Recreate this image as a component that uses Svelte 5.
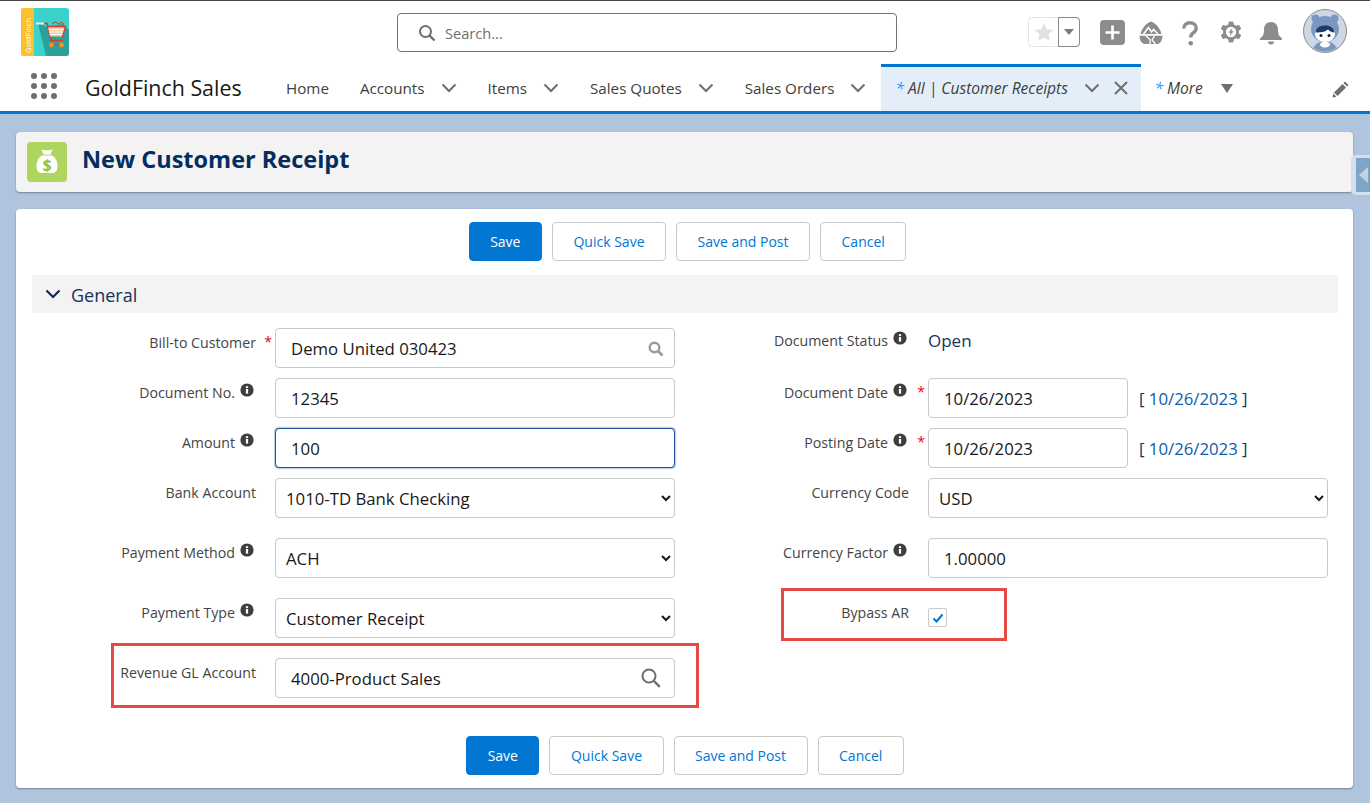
<script>
	const navItems = [
		{ label: 'Accounts' },
		{ label: 'Items' },
		{ label: 'Sales Quotes' },
		{ label: 'Sales Orders' }
	];
	const actions = ['Quick Save', 'Save and Post', 'Cancel'];
</script>

{#snippet info()}
	<svg class="info" viewBox="0 0 14 14"><circle cx="7" cy="7" r="6.6" fill="#3e3e3c" /><rect x="5.9" y="6" width="2.2" height="4.6" fill="#fff" /><rect x="5.9" y="3.2" width="2.2" height="1.9" fill="#fff" /></svg>
{/snippet}

{#snippet chevron(cls)}
	<svg class={cls} viewBox="0 0 16 10"><path d="M1.5 1.5 8 8l6.5-6.5" fill="none" stroke="currentColor" stroke-width="2" /></svg>
{/snippet}

{#snippet buttons()}
	<button class="btn primary">Save</button>
	{#each actions as a}
		<button class="btn">{a}</button>
	{/each}
{/snippet}

<div class="page">
	<header class="top">
		<div class="topbar">
			<svg class="logo" viewBox="0 0 48 48">
				<rect width="48" height="48" rx="3" fill="#3ad2ca" />
				<path d="M17 15 25 48h20a3 3 0 0 0 3-3V22l-6-6-16 3z" fill="#2ea09c" />
				<path d="M3 0h10v48H3a3 3 0 0 1-3-3V3a3 3 0 0 1 3-3z" fill="#fbc02d" />
				<text x="-45" y="9.500" transform="rotate(-90)" class="logo-text">GoldFinch</text>
				<path d="M15 15.500h8" stroke="#e9f3f2" stroke-width="2" />
				<path d="M23 15.500h3l4 17h12" fill="none" stroke="#cf3d31" stroke-width="1.500" />
				<path d="M27 19h17l-2.500 9.500H29z" fill="#f7c9a0" />
				<path d="M28 21.500h15M28.500 24h14M29 26.500h13" stroke="#fff" stroke-width="1" />
				<path d="M27 18.500h17.500l-3 10.500" fill="none" stroke="#cf3d31" stroke-width="1.300" />
				<path d="M31 16l3-2 4 2 3-2 2 3" fill="none" stroke="#cf3d31" stroke-width="1" />
				<path d="M31 37h9" stroke="#cf3d31" stroke-width="1" />
				<circle cx="30.500" cy="37" r="2.400" fill="#f5921e" /><circle cx="40.500" cy="37" r="2.400" fill="#f5921e" />
			</svg>

			<div class="search">
				<svg viewBox="0 0 18 18"><circle cx="7.500" cy="7.500" r="5.500" fill="none" stroke="#706e6b" stroke-width="2" /><path d="m11.500 11.500 5 5" stroke="#706e6b" stroke-width="2.400" /></svg>
				<span>Search...</span>
			</div>

			<div class="tools">
				<div class="fav">
					<span class="fav-star"><svg viewBox="0 0 24 24"><path d="m12 2 3 7 7.400.6-5.600 4.900 1.700 7.300L12 18l-6.500 3.800 1.700-7.300L1.600 9.600 9 9z" fill="#e2e2e2" /></svg></span>
					<span class="fav-drop"><i></i></span>
				</div>
				<svg class="t-plus" viewBox="0 0 25 25"><rect width="25" height="25" rx="4" fill="#8c8c8c" /><path d="M12.500 5.500v14M5.500 12.500h14" stroke="#fff" stroke-width="2.600" /></svg>
				<svg class="t-trail" viewBox="0 0 24 24">
					<path d="M12 .5C7.500 2 3 7 1.500 13h21C21 7 16.500 2 12 .5z" fill="#8c8c8c" />
					<path d="M4.500 13 9.500 6.500l3 4.500 2-2.500 4.500 4.500" fill="none" stroke="#fff" stroke-width="1.600" />
					<path d="M.5 14.800h23c0 4-1.500 7-4.500 8.200H5C2 21.800.5 18.800.5 14.800z" fill="#8c8c8c" />
					<path d="M7 15l4 3.500V23M15.500 15 13 19l3.500 4" fill="none" stroke="#fff" stroke-width="1.300" />
				</svg>
				<svg class="t-help" viewBox="0 0 16 25"><path d="M1.800 7.500C1.800 4 4.500 1.800 8 1.800s6.200 2.200 6.200 5.400c0 2.600-1.500 3.700-3.200 5-1.500 1-2.300 2-2.300 4.200" fill="none" stroke="#8c8c8c" stroke-width="3.400" /><circle cx="8.700" cy="22.300" r="2.300" fill="#8c8c8c" /></svg>
				<svg class="t-gear" viewBox="0 0 22 22">
					<circle cx="11" cy="11" r="8" fill="#8c8c8c" />
					<g fill="#8c8c8c">
						<rect x="8.500" y=".5" width="5" height="21" rx="1" />
						<rect x="8.500" y=".5" width="5" height="21" rx="1" transform="rotate(60 11 11)" />
						<rect x="8.500" y=".5" width="5" height="21" rx="1" transform="rotate(120 11 11)" />
					</g>
					<circle cx="11" cy="11" r="5.200" fill="#fff" />
					<path d="M12.500 6.800 8.500 11.800h2.200l-1 3.400 4-5h-2.200z" fill="#8c8c8c" />
				</svg>
				<svg class="t-bell" viewBox="0 0 24 24"><path d="M12 1c-4.500 0-7 3.400-7 7.500 0 5-1 6.500-3 8-.8.600-1 1.500-1 2.500h22c0-1-.2-1.900-1-2.500-2-1.500-3-3-3-8C19 4.400 16.500 1 12 1z" fill="#8c8c8c" /><path d="M9 20.500a3 3 0 0 0 6 0z" fill="#8c8c8c" /></svg>
				<svg class="avatar" viewBox="0 0 44 44">
					<defs><clipPath id="av"><circle cx="22" cy="22" r="20.500" /></clipPath></defs>
					<circle cx="22" cy="22" r="21.500" fill="#ced7e6" stroke="#8a8a8a" stroke-width="1" />
					<g clip-path="url(#av)">
						<circle cx="12.500" cy="9.500" r="4" fill="#7c97bf" /><circle cx="31.500" cy="9.500" r="4" fill="#7c97bf" />
						<ellipse cx="22" cy="20" rx="14" ry="13" fill="#7c97bf" />
						<path d="M8 46c1-8 6-14 14-14s13 6 14 14z" fill="#7c97bf" />
						<ellipse cx="22" cy="35.500" rx="5" ry="3" fill="#fff" />
						<ellipse cx="22" cy="25" rx="10" ry="8" fill="#fff" />
						<path d="M12.500 23.500c.5-4.500 4-7 9.500-7s9 2.500 9.500 7c-2.500-.2-4.500-1-6.500-3-2 1.700-4.500 2.500-7.500 2.700-1.500.1-3.500.2-5 .3z" fill="#1f3a66" />
						<circle cx="18" cy="26.500" r="1.500" fill="#16233d" /><circle cx="26" cy="26.500" r="1.500" fill="#16233d" />
					</g>
				</svg>
			</div>
		</div>

		<nav class="nav">
			<svg class="waffle" viewBox="0 0 26 26" fill="#706e6b">
				{#each [3, 13, 23] as y}
					{#each [3, 13, 23] as x}
						<circle cx={x} cy={y} r="3" />
					{/each}
				{/each}
			</svg>
			<span class="app-name">GoldFinch Sales</span>
			<a class="nav-item home">Home</a>
			{#each navItems as item}
				<a class="nav-item">{item.label}{@render chevron('nav-chev')}</a>
			{/each}
			<div class="tab">
				<span class="tab-label"><b>*</b> All | Customer Receipts</span>
				{@render chevron('nav-chev')}
				<svg class="tab-x" viewBox="0 0 14 14"><path d="m1 1 12 12M13 1 1 13" stroke="#706e6b" stroke-width="2" /></svg>
			</div>
			<div class="more">
				<span class="tab-label"><b>*</b> More</span>
				<i class="more-caret"></i>
			</div>
			<svg class="pencil" viewBox="0 0 18 18"><path d="M13 1.500 16.500 5 15 6.500 11.500 3zM10.500 4 14 7.500 5.500 16 2 12.500zM1.300 13.500l3.200 3.200-4 .8z" fill="#706e6b" /></svg>
		</nav>
	</header>

	<main class="content">
		<section class="title-card">
			<span class="title-icon">
				<svg viewBox="0 0 40 40">
					<path d="M14.500 7.500c3 1 8 1 11 0l-2 5h-7z" fill="#fff" />
					<path d="M15 13.500h10c3.500 2 5.500 6 5.500 10.500 0 5-2 7-5.500 7H15c-3.500 0-5.500-2-5.500-7 0-4.500 2-8.500 5.500-10.500z" fill="#fff" />
					<text x="20" y="28.500" class="bag-text">$</text>
				</svg>
			</span>
			<h1>New Customer Receipt</h1>
		</section>
		<div class="side-tab"><span><i></i></span></div>

		<section class="card">
			<div class="actions top-actions">{@render buttons()}</div>

			<div class="section-head">
				<svg viewBox="0 0 16 10"><path d="M1.500 1.500 8 8l6.500-6.500" fill="none" stroke="#0b2a5b" stroke-width="2.200" /></svg>
				<span>General</span>
			</div>

			<div class="form">
				<div class="col">
					<div class="row">
						<label class="lbl">Bill-to Customer<em>*</em></label>
						<div class="ctl lookup">
							<input class="inp" value="Demo United 030423" />
							<svg class="look-small" viewBox="0 0 16 16"><circle cx="6.500" cy="6.500" r="4.800" fill="none" stroke="#9b9b9b" stroke-width="2.400" /><path d="m10 10 4.500 4.500" stroke="#9b9b9b" stroke-width="2.800" /></svg>
						</div>
					</div>
					<div class="row">
						<label class="lbl has-info">Document No.{@render info()}</label>
						<div class="ctl"><input class="inp" value="12345" /></div>
					</div>
					<div class="row">
						<label class="lbl has-info">Amount{@render info()}</label>
						<div class="ctl"><input class="inp focused" value="100" /></div>
					</div>
					<div class="row">
						<label class="lbl">Bank Account</label>
						<div class="ctl"><select class="sel"><option>1010-TD Bank Checking</option></select></div>
					</div>
					<div class="row wide">
						<label class="lbl has-info">Payment Method{@render info()}</label>
						<div class="ctl"><select class="sel"><option>ACH</option></select></div>
					</div>
					<div class="row wide">
						<label class="lbl has-info">Payment Type{@render info()}</label>
						<div class="ctl"><select class="sel"><option>Customer Receipt</option></select></div>
					</div>
					<div class="row wide">
						<span class="mark mark-gl"></span>
						<label class="lbl">Revenue GL Account</label>
						<div class="ctl lookup">
							<input class="inp" value="4000-Product Sales" />
							<svg class="look-big" viewBox="0 0 20 20"><circle cx="8" cy="8" r="6.500" fill="none" stroke="#706e6b" stroke-width="2" /><path d="m12.800 12.800 6 6" stroke="#706e6b" stroke-width="2.400" /></svg>
						</div>
					</div>
				</div>

				<div class="col">
					<div class="row">
						<label class="lbl has-info status-lbl">Document Status{@render info()}</label>
						<div class="ctl status">Open</div>
					</div>
					<div class="row">
						<label class="lbl has-info">Document Date{@render info()}<em>*</em></label>
						<div class="ctl date">
							<input class="inp" value="10/26/2023" />
							<span class="today">[ <a>10/26/2023</a> ]</span>
						</div>
					</div>
					<div class="row">
						<label class="lbl has-info">Posting Date{@render info()}<em>*</em></label>
						<div class="ctl date">
							<input class="inp" value="10/26/2023" />
							<span class="today">[ <a>10/26/2023</a> ]</span>
						</div>
					</div>
					<div class="row">
						<label class="lbl">Currency Code</label>
						<div class="ctl"><select class="sel"><option>USD</option></select></div>
					</div>
					<div class="row wide">
						<label class="lbl has-info">Currency Factor{@render info()}</label>
						<div class="ctl"><input class="inp" value="1.00000" /></div>
					</div>
					<div class="row wide">
						<span class="mark mark-ar"></span>
						<label class="lbl">Bypass AR</label>
						<div class="ctl check-cell">
							<span class="check"><svg viewBox="0 0 14 14"><path d="m2.500 7.500 3 3 6-7" fill="none" stroke="#0176d3" stroke-width="2" /></svg></span>
						</div>
					</div>
				</div>
			</div>

			<div class="actions bottom-actions">{@render buttons()}</div>
		</section>
	</main>
</div>

<style>
	:global(body) {
		margin: 0;
		background: #b0c4de;
		font-family: 'Open Sans', sans-serif;
		color: #181818;
	}

	.page { min-height: 100vh; overflow: hidden; }

	.top { background: #fff; border-top: 1px solid #444; border-bottom: 3px solid #0176d3; }
	.topbar { height: 63px; display: flex; align-items: flex-start; padding-left: 21px; box-sizing: border-box; }
	.logo { width: 48px; height: 48px; margin-top: 7px; flex: none; }
	.logo-text { font-size: 7.500px; fill: #fff; font-family: 'Open Sans', sans-serif; }

	.search {
		width: 500px; height: 39px; margin: 12px 0 0 328px; box-sizing: border-box;
		border: 1px solid #747474; border-radius: 4px;
		display: flex; align-items: center; padding: 1px 0 0 20px;
		color: #706e6b; font-size: 14.600px;
	}
	.search svg { width: 18px; height: 18px; margin-right: 9px; }

	.tools { display: flex; align-items: flex-start; margin-left: 131px; position: relative; }
	.fav { display: flex; width: 52px; height: 30px; margin-top: 16px; box-sizing: border-box; border: 1px solid #e4e4e4; border-radius: 4px; }
	.fav-star { width: 30px; display: flex; align-items: center; justify-content: center; }
	.fav-star svg { width: 22px; height: 22px; }
	.fav-drop { flex: 1; border: 1px solid #8a8a8a; border-radius: 0 4px 4px 0; margin: -1px; display: flex; align-items: center; justify-content: center; }
	.fav-drop i { border: 5.500px solid transparent; border-top: 6px solid #7a7a7a; border-bottom: 0; }
	.t-plus { width: 25px; height: 25px; margin: 19px 0 0 20px; }
	.t-trail { width: 24px; height: 24px; margin: 20px 0 0 14px; }
	.t-help { width: 16px; height: 25px; margin: 20px 0 0 19px; }
	.t-gear { width: 22px; height: 22px; margin: 20px 0 0 22px; }
	.t-bell { width: 24px; height: 24px; margin: 20px 0 0 17px; }
	.avatar { width: 44px; height: 44px; margin: 8px 0 0 20px; }

	.nav { height: 47px; display: flex; align-items: center; padding-left: 31px; position: relative; font-size: 15.200px; color: #3e3e3c; }
	.waffle { width: 26px; height: 26px; margin-top: -3px; }
	.app-name { font-size: 21.400px; color: #181818; margin-left: 28px; width: 201px; flex: none; }
	.nav-item { display: flex; align-items: center; margin-right: 31px; padding-top: 1px; }
	.nav-chev { width: 16px; height: 10px; color: #706e6b; margin-left: 16px; }
	.tab {
		width: 260px; height: 47px; box-sizing: border-box; margin-left: -16px;
		border-top: 3px solid #0176d3; background: #e3eef9;
		display: flex; align-items: center; padding: 0 0 3px 14px;
	}
	.tab-label { font-style: italic; white-space: nowrap; font-size: 15.600px; }
	.tab-label b { font-weight: 400; color: #1b96ff; }
	.tab .tab-label { width: 173px; }
	.tab-x { width: 14px; height: 14px; margin-left: 14px; }
	.more { display: flex; align-items: center; margin-left: 13px; }
	.more-caret { border: 6.500px solid transparent; border-top: 9px solid #706e6b; border-bottom: 0; margin: 1px 0 0 18px; }
	.pencil { position: absolute; right: 20px; top: 16px; width: 18px; height: 18px; }

	.content { padding: 18px 17px 15px 16px; position: relative; }
	.title-card {
		height: 60px; box-sizing: border-box; background: #f3f3f3; border-radius: 4px;
		box-shadow: 0 1px 2px rgba(0, 0, 0, .35);
		display: flex; align-items: center; padding-left: 11px; gap: 15px;
	}
	.title-icon { width: 40px; height: 40px; background: #aed65f; border-radius: 4px; display: block; }
	.title-icon svg { display: block; }
	.bag-text { font-size: 16px; font-weight: 700; fill: #8fc33f; text-anchor: middle; font-family: 'Open Sans', sans-serif; }
	h1 { margin: -6px 0 0; font-size: 23.500px; font-weight: 700; color: #032d60; }

	.side-tab {
		position: absolute; right: 0; top: 41px; width: 19px; height: 40px;
		background: #d5e0ee; border-radius: 5px 0 0 5px; display: flex; align-items: center; justify-content: flex-end;
	}
	.side-tab span { width: 14px; height: 34px; background: #7ea6c4; display: flex; align-items: center; justify-content: center; }
	.side-tab i { border: 8px solid transparent; border-right: 9px solid #c3d3e2; border-left: 0; }

	.card {
		margin-top: 17px; height: 579px; box-sizing: border-box; background: #fff; border-radius: 4px;
		box-shadow: 0 1px 2px rgba(0, 0, 0, .35);
		padding: 13px 15px 0 16px;
	}

	.actions { display: flex; justify-content: center; gap: 10px; }
	.top-actions { padding-left: 5px; }
	.bottom-actions { margin-top: 38px; }
	.btn {
		height: 39px; padding: 0 20.500px; box-sizing: border-box; background: #fff;
		border: 1px solid #c9c9c9; border-radius: 4px;
		font: 14px 'Open Sans', sans-serif; color: #0176d3;
	}
	.primary { background: #0176d3; border-color: #0176d3; color: #fff; }

	.section-head {
		margin-top: 14px; height: 38px; background: #f3f3f3; color: #16325c; font-size: 18px;
		display: flex; align-items: center; padding-left: 13px; gap: 10px;
	}
	.section-head span { padding-top: 1px; }
	.section-head svg { width: 16px; height: 10px; }

	.form { display: grid; grid-template-columns: 1fr 1fr; margin-top: 15px; }
	.col { display: flex; flex-direction: column; gap: 10px; }
	.row { display: flex; position: relative; }
	.row.wide { margin-top: 10px; }

	.lbl {
		width: 243px; flex: none; box-sizing: border-box; padding: 5px 19px 0 0;
		text-align: right; font-size: 14.200px; line-height: 20px; color: #444; position: relative; white-space: nowrap;
	}
	.lbl.has-info { padding-right: 21px; }
	.lbl em { position: absolute; right: 3px; top: 4px; color: #ea001e; font-style: normal; }
	.status-lbl { padding-top: 3px; }
	.info { width: 14px; height: 14px; margin-left: 5px; vertical-align: 1px; }

	.ctl { width: 400px; position: relative; }
	.inp {
		width: 100%; height: 40px; box-sizing: border-box; padding: 1px 15px 0; display: block;
		background: #fff; border: 1px solid #c9c9c9; border-radius: 4px;
		font: 16.750px 'Open Sans', sans-serif; color: #181818; outline: none;
	}
	.inp.focused { border-color: #1b5297; box-shadow: 0 0 2px #1b5297; }
	.sel {
		width: 100%; height: 40px; box-sizing: border-box; padding: 1px 6px 0;
		background: #fff; border: 1px solid #c9c9c9; border-radius: 4px;
		font: 16.750px 'Open Sans', sans-serif; color: #181818;
	}
	.look-small { position: absolute; right: 11px; top: 13px; width: 16px; height: 16px; }
	.look-big { position: absolute; right: 14px; top: 10px; width: 20px; height: 20px; }

	.status { font-size: 17px; line-height: 26px; color: #16325c; height: 40px; }
	.date { display: flex; align-items: center; gap: 11px; }
	.date .inp { width: 200px; flex: none; }
	.today { font-size: 16.750px; color: #16325c; padding-top: 1px; }
	.today a { color: #0b5cab; }

	.check-cell { height: 40px; }
	.check {
		display: flex; align-items: center; justify-content: center; margin-top: 10px;
		width: 19px; height: 19px; box-sizing: border-box; border: 1px solid #c9c9c9; border-radius: 2px;
	}
	.check svg { width: 14px; height: 14px; }

	.mark { position: absolute; border: 3px solid #e64a45; box-sizing: border-box; pointer-events: none; }
	.mark-gl { left: 79px; top: -15px; width: 588px; height: 65px; }
	.mark-ar { left: 96px; top: -10px; width: 226px; height: 53px; }
</style>
